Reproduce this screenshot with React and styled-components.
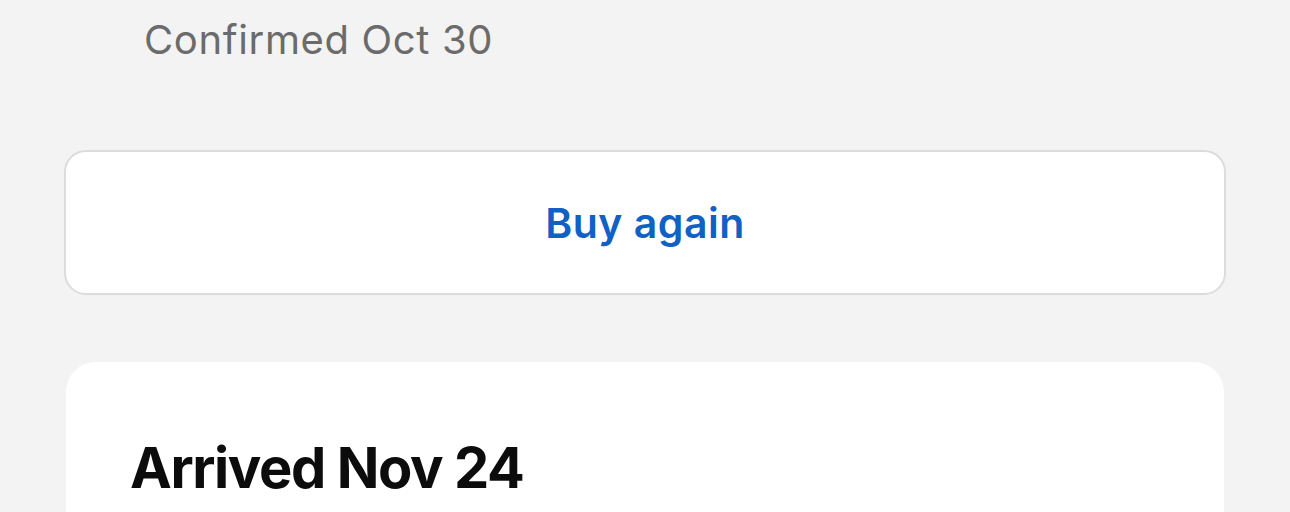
import React from "react";
import styled, { createGlobalStyle } from "styled-components";

const GlobalStyle = createGlobalStyle`
  html, body {
    margin: 0;
    padding: 0;
    background: #f3f3f3;
    font-family: Inter, "Noto Sans", sans-serif;
    -webkit-font-smoothing: antialiased;
  }
`;

const Page = styled.div`
  width: 1290px;
  height: 512px;
  overflow: hidden;
  box-sizing: border-box;
  padding: 14px 64px 0 64px;
  display: flex;
  flex-direction: column;
`;

const Status = styled.div`
  margin-left: 80px;
  font-size: 40px;
  line-height: 52px;
  color: #6b6b6b;
  letter-spacing: 0.65px;
`;

const ActionButton = styled.button`
  margin-top: 84px;
  width: 1162px;
  height: 145px;
  box-sizing: border-box;
  background: #ffffff;
  border: 2px solid #dcdcdc;
  border-radius: 22px;
  font-family: inherit;
  font-size: 41px;
  font-weight: 600;
  letter-spacing: 0.5px;
  color: #1160c4;
  cursor: pointer;
`;

const Card = styled.section`
  margin: 67px 2px 0 2px;
  background: #ffffff;
  border-radius: 30px 30px 0 0;
  padding: 72px 64px 0 64px;
  flex: 1;
`;

const CardTitle = styled.h2`
  margin: 0;
  font-size: 56px;
  line-height: 68px;
  font-weight: 700;
  color: #0c0c0c;
  letter-spacing: -1.4px;
`;

export default function App() {
  return (
    <>
      <GlobalStyle />
      <Page>
        <Status>Confirmed Oct 30</Status>
        <ActionButton>Buy again</ActionButton>
        <Card>
          <CardTitle>Arrived Nov 24</CardTitle>
        </Card>
      </Page>
    </>
  );
}
